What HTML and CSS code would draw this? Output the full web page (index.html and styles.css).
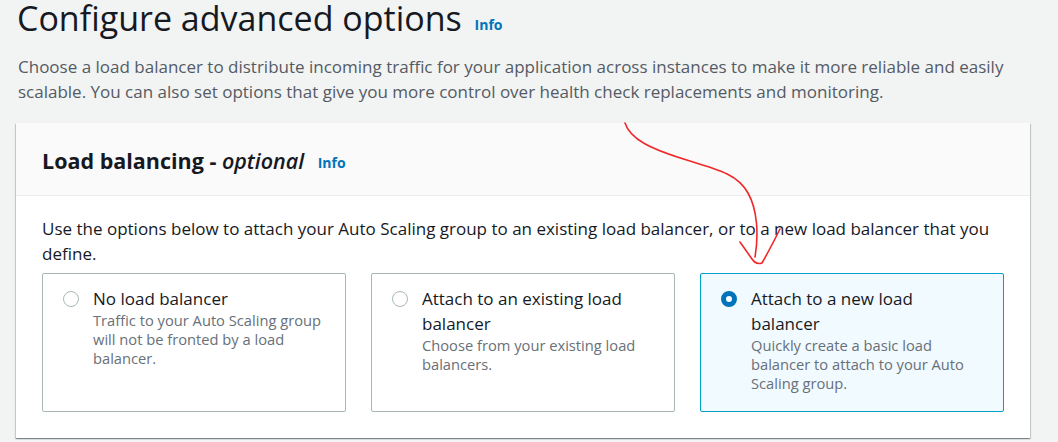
FILE: index.html
```html
<!DOCTYPE html>
<html lang="en">
<head>
<meta charset="utf-8">
<title>Configure advanced options</title>
<link rel="stylesheet" href="styles.css">
</head>
<body>
<main class="page">
  <h1 class="title">Configure advanced options <a class="info" href="#">Info</a></h1>
  <p class="intro">Choose a load balancer to distribute incoming traffic for your application across instances to make it more reliable and easily scalable. You can also set options that give you more control over health check replacements and monitoring.</p>

  <section class="panel">
    <header class="panel-head">
      <h2 class="panel-title">Load balancing - <em>optional</em> <a class="info info-sm" href="#">Info</a></h2>
    </header>
    <div class="panel-body">
      <p class="panel-text">Use the options below to attach your Auto Scaling group to an existing load balancer, or to a new load balancer that you define.</p>
      <div class="tiles">
        <label class="tile">
          <span class="radio"></span>
          <span class="tile-text">
            <span class="tile-label">No load balancer</span>
            <span class="tile-desc">Traffic to your Auto Scaling group will not be fronted by a load balancer.</span>
          </span>
        </label>
        <label class="tile">
          <span class="radio"></span>
          <span class="tile-text">
            <span class="tile-label">Attach to an existing load balancer</span>
            <span class="tile-desc">Choose from your existing load balancers.</span>
          </span>
        </label>
        <label class="tile tile-selected">
          <span class="radio radio-on"></span>
          <span class="tile-text">
            <span class="tile-label">Attach to a new load balancer</span>
            <span class="tile-desc">Quickly create a basic load balancer to attach to your Auto Scaling group.</span>
          </span>
        </label>
      </div>
    </div>
  </section>

  <svg class="annotation" width="1058" height="442" viewBox="0 0 1058 442" aria-hidden="true">
    <path d="M625 126 C630 142 650 152 690 164 C720 173 738 178 748 196 C757 212 759 236 755 260" fill="none" stroke="#f0282a" stroke-width="1.6" stroke-linecap="round"/>
    <path d="M740 245 L752 262 Q756 268 762 266 Q770 252 780 232" fill="none" stroke="#f0282a" stroke-width="1.6" stroke-linecap="round" stroke-linejoin="round"/>
  </svg>
</main>
</body>
</html>
```

FILE: styles.css
```css
* { box-sizing: border-box; }

html, body {
  margin: 0;
  padding: 0;
  background: #f2f3f3;
}

body {
  font-family: "Open Sans", "Noto Sans", Arial, sans-serif;
  color: #16191f;
  width: 1058px;
  height: 442px;
  overflow: hidden;
}

.page {
  position: relative;
  padding: 0 28px 0 16px;
}

.title {
  margin: -3px 0 0;
  padding-left: 1px;
  font-size: 34px;
  font-weight: 400;
  line-height: 42px;
  color: #16191f;
}

.info {
  font-size: 14px;
  font-weight: 700;
  color: #0073bb;
  text-decoration: none;
  margin-left: 4px;
  vertical-align: 1px;
}

.intro {
  margin: 8px 0 0 2px;
  font-size: 17px;
  line-height: 25px;
  color: #545b64;
  max-width: 1000px;
}

.panel {
  margin-top: 19px;
  background: #fff;
  box-shadow: 0 1px 1px 0 rgba(0, 28, 36, 0.3), 1px 1px 1px 0 rgba(0, 28, 36, 0.15), -1px 1px 1px 0 rgba(0, 28, 36, 0.15);
}

.panel-head {
  height: 73px;
  background: #fafafa;
  border-bottom: 1px solid #eaeded;
  display: flex;
  align-items: center;
  padding: 6px 26px 0;
}

.panel-title {
  margin: 0;
  font-size: 21.5px;
  font-weight: 700;
  line-height: 28px;
}

.panel-title em {
  font-weight: 600;
}

.info-sm {
  margin-left: 8px;
  vertical-align: 1px;
}

.panel-body {
  padding: 20px 26px 26px;
}

.panel-text {
  margin: 0;
  font-size: 17px;
  line-height: 25px;
  color: #16191f;
}

.tiles {
  margin-top: 7px;
  display: grid;
  grid-template-columns: repeat(3, 1fr);
  gap: 25px;
}

.tile {
  display: flex;
  align-items: flex-start;
  gap: 14px;
  min-height: 139px;
  padding: 12px 20px 18px 20px;
  border: 1px solid #aab7b8;
  border-radius: 2px;
  background: #fff;
}

.tile-selected {
  background: #f1faff;
  border-color: #00a1c9;
}

.radio {
  flex: none;
  width: 16px;
  height: 16px;
  margin-top: 5px;
  border: 1px solid #aab7b8;
  border-radius: 50%;
  background: #fff;
}

.radio-on {
  border: 5px solid #0073bb;
  background: #fff;
}

.tile-text {
  display: flex;
  flex-direction: column;
}

.tile-label {
  font-size: 17px;
  line-height: 25px;
  color: #16191f;
}

.tile-desc {
  font-size: 14.7px;
  line-height: 19px;
  color: #687078;
}

.annotation {
  position: absolute;
  left: 0;
  top: 0;
  pointer-events: none;
}
```
